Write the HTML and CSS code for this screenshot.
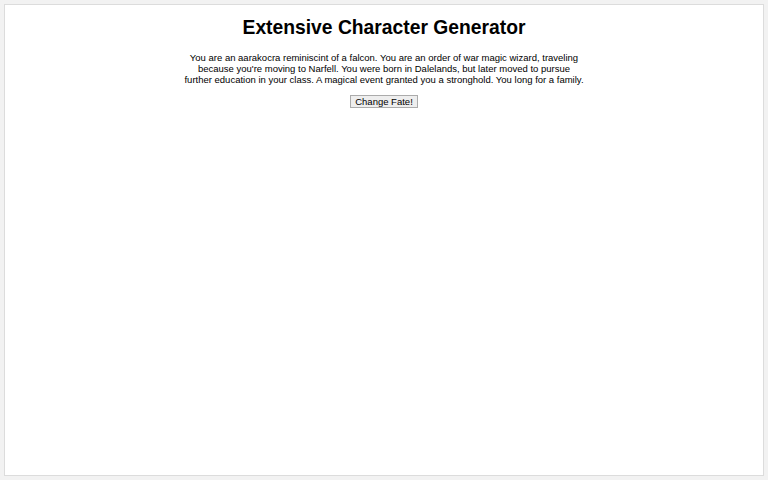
FILE: index.html
```html
<!DOCTYPE html>
<html>
<head>
<meta charset="utf-8">
<link rel="stylesheet" href="styles.css">
</head>
<body>
<div class="card">
  <h1 class="title">Extensive Character Generator</h1>
  <p class="story">You are an aarakocra reminiscint of a falcon. You are an order of war magic wizard, traveling because you're moving to Narfell. You were born in Dalelands, but later moved to pursue further education in your class. A magical event granted you a stronghold. You long for a family.</p>
  <div class="actions"><button class="btn">Change Fate!</button></div>
</div>
</body>
</html>
```
FILE: styles.css
```css
html, body { margin: 0; padding: 0; }
body {
  background: #f2f2f2;
  padding: 4px;
  font-family: "Liberation Sans", Arial, sans-serif;
  box-sizing: border-box;
  height: 480px;
}
.card {
  background: #fff;
  border: 1px solid #dcdcdc;
  height: 100%;
  box-sizing: border-box;
  display: flex;
  flex-direction: column;
  align-items: center;
}
.title {
  font-size: 19.3px;
  font-weight: bold;
  margin: 11px 0 0;
  line-height: 23px;
  color: #000;
}
.story {
  font-size: 9.5px;
  line-height: 11px;
  text-align: center;
  max-width: 402px;
  margin: 12.5px 0 0;
  color: #000;
}
.actions { margin-top: 10.5px; display: flex; }
.btn {
  font-family: "Liberation Sans", Arial, sans-serif;
  font-size: 9.5px;
  line-height: 11px;
  padding: 0 4px;
  height: 13px;
  background: #eeeeee;
  border: 1px solid #ababab;
  border-radius: 0;
  color: #000;
}
```
